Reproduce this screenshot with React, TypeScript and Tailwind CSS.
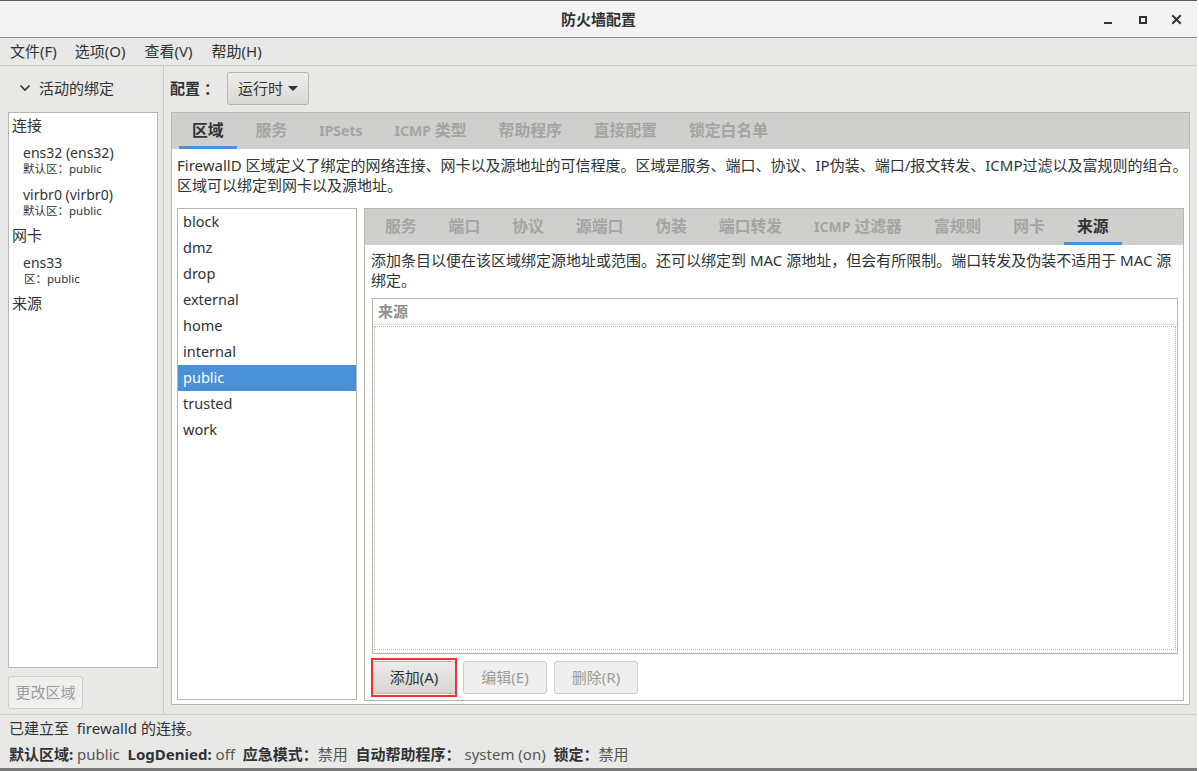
import React from "react";

const FONT = "font-['Noto_Sans','Noto_Sans_CJK_SC',sans-serif]";

function Label({ text }: { text: string }) {
  const parts = text.split(/([A-Za-z]+)/).filter((p) => p.length > 0);
  return (
    <>
      {parts.map((p, i) =>
        /^[A-Za-z]+$/.test(p) ? (
          <span key={i} className="text-[14px]">
            {p}
          </span>
        ) : (
          <span key={i}>{p}</span>
        )
      )}
    </>
  );
}

function Tab({ label, active }: { label: string; active?: boolean }) {
  return (
    <div className="relative h-full flex items-center px-[16px]">
      <span
        className={
          "text-[15.8px] font-bold leading-none whitespace-pre " +
          (active ? "text-[#2e3436]" : "text-[#a4a4a2]")
        }
      >
        <Label text={label} />
      </span>
      {active && (
        <div className="absolute left-[3px] right-[3px] bottom-0 h-[3px] bg-[#4a90d9]" />
      )}
    </div>
  );
}

function Btn({
  label,
  disabled,
  w = "w-[84px]",
}: {
  label: string;
  disabled?: boolean;
  w?: string;
}) {
  return (
    <div
      className={
        w +
        " h-[33px] flex items-center justify-center rounded-[3px] border text-[15px] " +
        (disabled
          ? "border-[#d0ccc8] bg-[#efefee] text-[#9a9c9c]"
          : "border-[#b6b6b3] bg-gradient-to-b from-[#ececea] to-[#d7d5d2] text-[#2e3436]")
      }
    >
      {label}
    </div>
  );
}

export default function App() {
  const zones = ["block", "dmz", "drop", "external", "home", "internal", "public", "trusted", "work"];
  const outerTabs = ["区域", "服务", "IPSets", "ICMP 类型", "帮助程序", "直接配置", "锁定白名单"];
  const innerTabs = ["服务", "端口", "协议", "源端口", "伪装", "端口转发", "ICMP 过滤器", "富规则", "网卡", "来源"];

  return (
    <div className={"w-[1199px] h-[771px] bg-white overflow-hidden text-[#2e3436] " + FONT}>
      <div className="w-[1197px] h-[771px] flex flex-col bg-[#e8e8e7] border-t border-[#5a5a5a] border-b-[3px] border-b-[#7a7a7a]">
        {/* Title bar */}
        <div className="relative h-[37px] shrink-0 bg-[#f3f3f3] flex items-center justify-center border-b border-[#8e8e8e]">
          <span className="text-[15px] font-bold leading-none">防火墙配置</span>
          <div className="absolute right-0 top-0 h-full">
            <svg width="120" height="36" viewBox="0 0 120 36" className="block">
              <rect x="27" y="21" width="8" height="2" fill="#2e3436" />
              <rect x="63" y="16" width="6" height="6" fill="none" stroke="#2e3436" strokeWidth="2" />
              <path d="M96 15 L103 22 M103 15 L96 22" stroke="#2e3436" strokeWidth="2" strokeLinecap="square" />
            </svg>
          </div>
        </div>

        {/* Menu bar */}
        <div className="h-[28px] shrink-0 flex items-center border-b border-[#cdcdcb] text-[15px] leading-none">
          <span className="ml-[10px]">文件(F)</span>
          <span className="ml-[18px]">选项(O)</span>
          <span className="ml-[19px]">查看(V)</span>
          <span className="ml-[19px]">帮助(H)</span>
        </div>

        {/* Main */}
        <div className="h-[648px] shrink-0 flex">
          {/* Left column */}
          <div className="w-[164px] shrink-0 flex flex-col pl-[8px] pt-[10px] border-r border-[#cacac8]">
            <div className="h-[24px] flex items-center text-[15px]">
              <svg width="12" height="8" viewBox="0 0 12 8" className="ml-[11px] mr-[8px]">
                <path d="M1.5 1.5 L6 6 L10.5 1.5" fill="none" stroke="#2e3436" strokeWidth="1.6" />
              </svg>
              <span>活动的绑定</span>
            </div>
            <div className="mt-[12px] w-[150px] h-[556px] border border-[#b6b6b3] bg-white flex flex-col">
              <div className="h-[24px] flex items-center pl-[3px] text-[15px]">连接</div>
              <div className="mt-[5px] h-[20px] flex items-center pl-[14px] text-[14px]">ens32 (ens32)</div>
              <div className="h-[14px] flex items-center pl-[14px] text-[11.5px]">默认区：public</div>
              <div className="mt-[8px] h-[20px] flex items-center pl-[14px] text-[14px]">virbr0 (virbr0)</div>
              <div className="h-[14px] flex items-center pl-[14px] text-[11.5px]">默认区：public</div>
              <div className="mt-[5px] h-[24px] flex items-center pl-[3px] text-[15px]">网卡</div>
              <div className="mt-[5px] h-[20px] flex items-center pl-[14px] text-[14px]">ens33</div>
              <div className="h-[14px] flex items-center pl-[15px] text-[11.5px]">区：public</div>
              <div className="mt-[5px] h-[24px] flex items-center pl-[3px] text-[15px]">来源</div>
            </div>
            <div className="mt-[8px]">
              <Btn label="更改区域" disabled w="w-[75px]" />
            </div>
          </div>

          {/* Right column */}
          <div className="flex-1 flex flex-col pl-[6px] pt-[6px]">
            <div className="h-[33px] flex items-center">
              <span className="text-[15px] font-bold">配置 ：</span>
              <div className="ml-[8px] w-[82px] h-[33px] rounded-[3px] border border-[#b6b6b3] bg-gradient-to-b from-[#ededeb] to-[#dad8d5] flex items-center pl-[10px] text-[15px]">
                <span>运行时</span>
                <svg width="10" height="6" viewBox="0 0 10 6" className="ml-[5px]">
                  <path d="M0 0 L10 0 L5 5 Z" fill="#2e3436" />
                </svg>
              </div>
            </div>

            {/* Outer notebook */}
            <div className="mt-[7px] ml-[1px] w-[1019px] h-[593px] border border-[#b6b6b3] flex flex-col bg-white">
              <div className="h-[36px] shrink-0 bg-[#cfcfcd] flex pl-[4px]">
                {outerTabs.map((t, i) => (
                  <Tab key={t} label={t} active={i === 0} />
                ))}
              </div>
              <div className="flex-1 flex flex-col px-[5px] pt-[6px] pb-[4px]">
                <div className="text-[15px] leading-[20px] whitespace-nowrap">
                  FirewallD 区域定义了绑定的网络连接、网卡以及源地址的可信程度。区域是服务、端口、协议、IP伪装、端口/报文转发、ICMP过滤以及富规则的组合。
                  <br />
                  区域可以绑定到网卡以及源地址。
                </div>
                <div className="mt-[13px] flex gap-[7px] h-[492px]">
                  {/* Zone list */}
                  <div className="w-[180px] h-full border border-[#b6b6b3] bg-white flex flex-col">
                    {zones.map((z) => (
                      <div
                        key={z}
                        className={
                          "h-[26px] flex items-center pl-[5px] text-[14.5px] " +
                          (z === "public" ? "bg-[#4a90d9] text-white" : "")
                        }
                      >
                        {z}
                      </div>
                    ))}
                  </div>

                  {/* Inner notebook */}
                  <div className="w-[820px] h-[493px] border border-[#b6b6b3] flex flex-col bg-white">
                    <div className="h-[36px] shrink-0 bg-[#cfcfcd] flex pl-[4px]">
                      {innerTabs.map((t, i) => (
                        <Tab key={t} label={t} active={i === innerTabs.length - 1} />
                      ))}
                    </div>
                    <div className="flex-1 flex flex-col pl-[6px] pr-[6px] pt-[5px]">
                      <div className="text-[15px] leading-[20px] whitespace-nowrap">
                        添加条目以便在该区域绑定源地址或范围。还可以绑定到 MAC 源地址，但会有所限制。端口转发及伪装不适用于 MAC 源
                        <br />
                        绑定。
                      </div>
                      <div className="mt-[8px] ml-[1px] w-[806px] h-[356px] border border-[#b6b6b3] flex flex-col">
                        <div className="h-[26px] shrink-0 border-b border-[#e2e2e0] flex items-center pl-[5px] text-[15px] font-bold text-[#8f8f8d]">
                          来源
                        </div>
                        <div className="mx-[1px] mt-[1px] h-[324px] border border-dotted border-[#b4b4b2]" />
                      </div>
                      <div className="mt-[7px] flex gap-[7px] ml-[1px]">
                        <div className="relative">
                          <Btn label="添加(A)" />
                          <div className="absolute left-[-1px] right-[-1px] top-[-3px] bottom-[-3px] border-[2px] border-[#f03232]" />
                        </div>
                        <Btn label="编辑(E)" disabled />
                        <Btn label="删除(R)" disabled />
                      </div>
                    </div>
                  </div>
                </div>
              </div>
            </div>
          </div>
        </div>

        {/* Status bar */}
        <div className="flex-1 border-t border-[#cdcdcb] flex flex-col pt-[2px] pl-[9px] text-[15px]">
          <div className="h-[22px] flex items-center">已建立至&nbsp;&nbsp;firewalld 的连接。</div>
          <div className="mt-[4px] h-[22px] flex items-center whitespace-pre">
            <b>默认区域:</b>
            <span className="text-[#555753]"> public  </span>
            <b>LogDenied:</b>
            <span className="text-[#555753]"> off  </span>
            <b>应急模式：</b>
            <span className="text-[#555753]">禁用  </span>
            <b>自动帮助程序：</b>
            <span className="text-[#555753]"> system (on)  </span>
            <b>锁定：</b>
            <span className="text-[#555753]">禁用</span>
          </div>
        </div>
      </div>
    </div>
  );
}
